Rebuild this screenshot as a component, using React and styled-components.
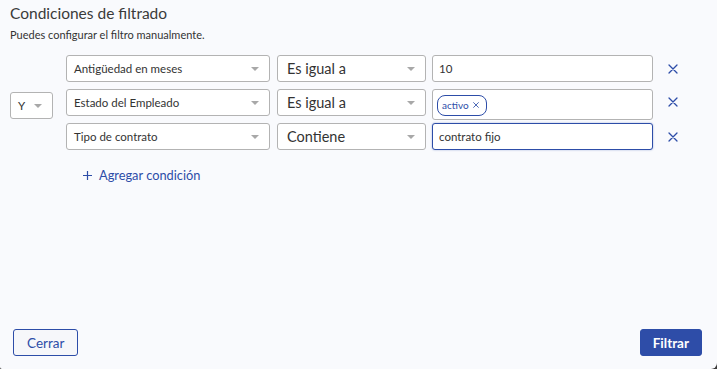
import React from 'react';
import styled, { createGlobalStyle } from 'styled-components';

const GlobalStyle = createGlobalStyle`
  html, body {
    margin: 0;
    padding: 0;
    background: #3a3a3a;
  }
  * { box-sizing: border-box; }
`;

const Dialog = styled.div`
  width: 717px;
  height: 369px;
  background: #f9fafd;
  border-bottom-right-radius: 6px;
  border-bottom-left-radius: 2px;
  display: flex;
  flex-direction: column;
  font-family: Lato, 'Open Sans', sans-serif;
  color: #333;
  padding: 4px 16px 13px 10px;
`;

const Title = styled.h2`
  margin: 0;
  font-size: 15.5px;
  font-weight: 400;
  line-height: 18px;
  color: #3a3a3a;
`;

const Subtitle = styled.p`
  margin: 6px 0 0 0;
  font-size: 11px;
  line-height: 13px;
  color: #333;
`;

const Builder = styled.div`
  display: flex;
  align-items: center;
  margin-top: 14px;
`;

const Rows = styled.div`
  display: flex;
  flex-direction: column;
  gap: 2px;
  margin-left: 13px;
`;

const Row = styled.div`
  display: flex;
  align-items: flex-start;
  min-height: 32px;
`;

const Select = styled.div`
  width: ${p => p.$w}px;
  height: 27px;
  margin-right: ${p => p.$mr || 0}px;
  background: #fff;
  border: 1px solid #b3b3b3;
  border-radius: 3px;
  display: flex;
  align-items: center;
  justify-content: space-between;
  padding: 0 10px 0 ${p => (p.$big ? 9 : 7)}px;
  font-size: ${p => (p.$big ? 14.5 : 11.5)}px;
  color: #333;
  white-space: nowrap;
`;

const Caret = styled.span`
  width: 0;
  height: 0;
  border-left: 4px solid transparent;
  border-right: 4px solid transparent;
  border-top: 4px solid #a8a8a8;
  margin-top: 1px;
`;

const ValueBox = styled.div`
  width: 221px;
  min-height: ${p => (p.$tall ? 31 : 27)}px;
  background: #fff;
  border: 1px solid ${p => (p.$focus ? '#2d4da8' : '#b3b3b3')};
  box-shadow: ${p => (p.$focus ? '0 0 2px rgba(45,77,168,0.45)' : 'none')};
  border-radius: 3px;
  display: flex;
  align-items: center;
  padding: 0 6px;
  font-size: 11.5px;
  color: #333;
`;

const Chip = styled.span`
  display: inline-flex;
  align-items: center;
  gap: 4px;
  height: 21px;
  padding: 0 7px 0 4px;
  border: 1px solid #2d4da8;
  border-radius: 8px;
  color: #2d4da8;
  font-size: 10px;
  margin-left: -2px;
  margin-top: 1px;
`;

const RemoveButton = styled.button`
  width: 12px;
  height: 12px;
  margin: ${p => p.$top}px 0 0 14px;
  padding: 0;
  border: none;
  background: none;
  display: flex;
  align-items: center;
  justify-content: center;
  cursor: pointer;
`;

const AddLink = styled.button`
  margin: 12px 0 0 73px;
  align-self: flex-start;
  display: flex;
  align-items: center;
  gap: 7px;
  padding: 0;
  border: none;
  background: none;
  font-family: inherit;
  font-size: 12.8px;
  color: #2d4da8;
  cursor: pointer;
`;

const Footer = styled.div`
  margin-top: auto;
  display: flex;
  justify-content: space-between;
  padding-left: 3px;
  margin-right: -1px;
`;

const Button = styled.button`
  height: 27px;
  padding: 0 ${p => (p.$primary ? 12 : 13)}px;
  font-family: inherit;
  font-size: 13.5px;
  font-weight: ${p => (p.$primary ? 700 : 400)};
  border-radius: 3px;
  border: 1px solid #2d4da8;
  background: ${p => (p.$primary ? '#2e4da8' : '#f6f7fa')};
  color: ${p => (p.$primary ? '#fff' : '#2d4da8')};
  cursor: pointer;
`;

const Cross = ({ size = 10, stroke = 1.3 }) => (
  <svg width={size} height={size} viewBox="0 0 10 10">
    <path d="M1 1 L9 9 M9 1 L1 9" stroke="#2d4da8" strokeWidth={stroke} fill="none" strokeLinecap="round" />
  </svg>
);

const conditions = [
  { field: 'Antigüedad en meses', op: 'Es igual a', value: '10' },
  { field: 'Estado del Empleado', op: 'Es igual a', chip: 'activo' },
  { field: 'Tipo de contrato', op: 'Contiene', value: 'contrato fijo', focus: true },
];

const App = () => (
  <>
    <GlobalStyle />
    <Dialog>
      <Title>Condiciones de filtrado</Title>
      <Subtitle>Puedes configurar el filtro manualmente.</Subtitle>

      <Builder>
        <Select $w={43}>
          Y <Caret />
        </Select>
        <Rows>
          {conditions.map(c => (
            <Row key={c.field}>
              <Select $w={204} $mr={7}>
                {c.field} <Caret />
              </Select>
              <Select $w={149} $mr={6} $big>
                {c.op} <Caret />
              </Select>
              <ValueBox $tall={!!c.chip} $focus={c.focus}>
                {c.chip ? (
                  <Chip>
                    {c.chip} <Cross size={6} stroke={1.4} />
                  </Chip>
                ) : (
                  c.value
                )}
              </ValueBox>
              <RemoveButton $top={c.chip ? 7 : 8}>
                <Cross />
              </RemoveButton>
            </Row>
          ))}
        </Rows>
      </Builder>

      <AddLink>
        <svg width="9" height="9" viewBox="0 0 9 9">
          <path d="M4.5 0 V9 M0 4.5 H9" stroke="#2d4da8" strokeWidth="1.2" />
        </svg>
        Agregar condición
      </AddLink>

      <Footer>
        <Button>Cerrar</Button>
        <Button $primary>Filtrar</Button>
      </Footer>
    </Dialog>
  </>
);

export default App;
